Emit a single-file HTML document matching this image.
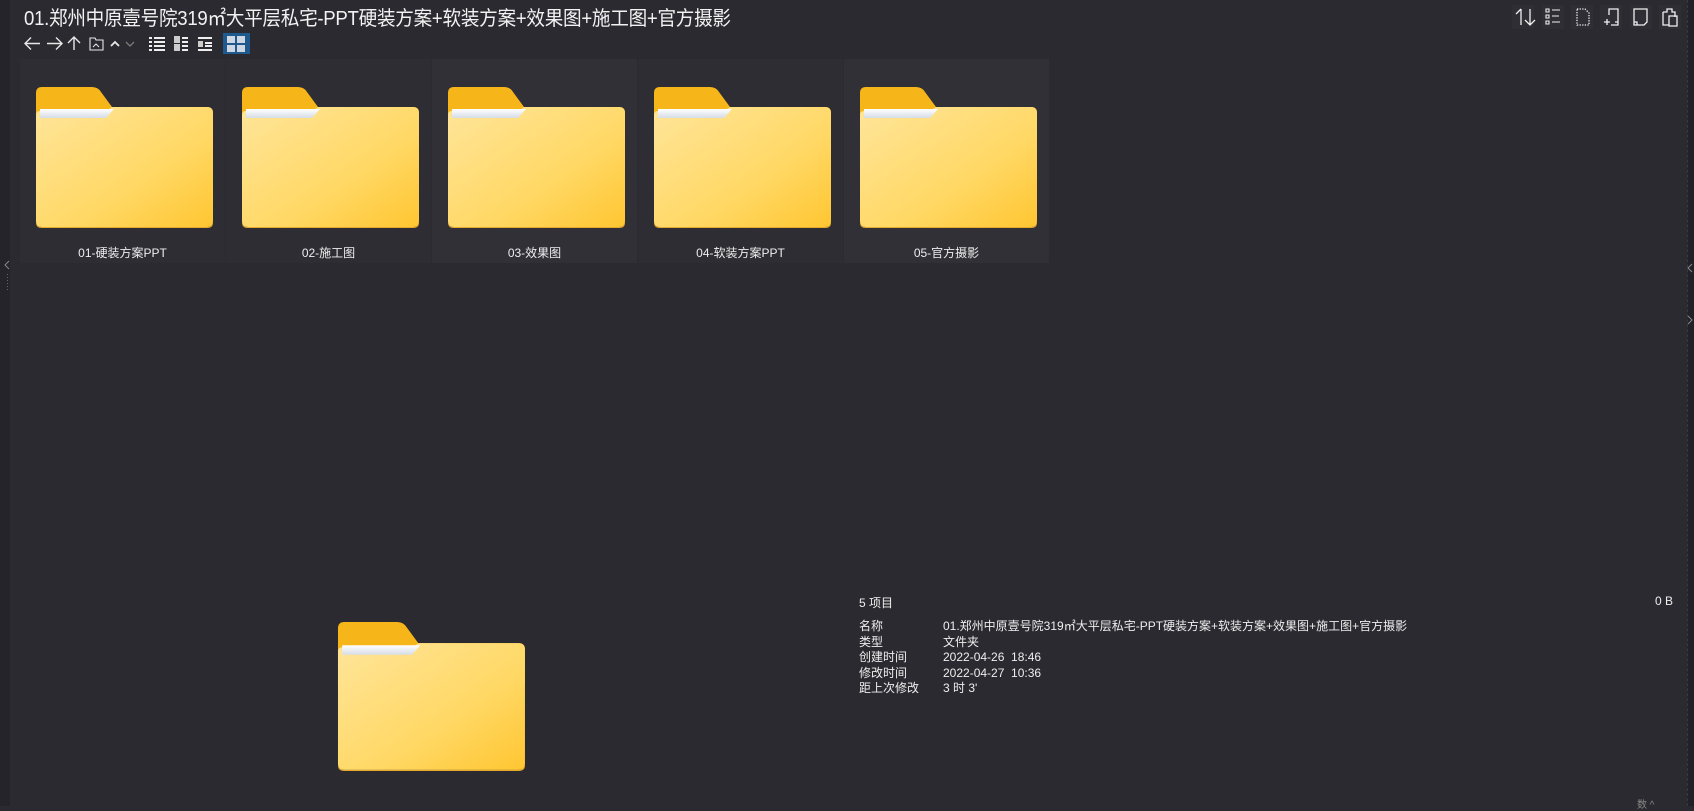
<!DOCTYPE html>
<html><head><meta charset="utf-8"><style>
*{margin:0;padding:0;box-sizing:border-box}
body{width:1694px;height:806px;background:#2b2a30;overflow:hidden;position:relative;font-family:"Liberation Sans","Noto Sans CJK SC",sans-serif;color:#fff}
.ls{position:absolute;left:0;top:0;width:10px;height:806px;background:#25242a}
.rs{position:absolute;right:0;top:0;width:7px;height:806px;background:#222127;border-left:1px dashed #3a3940}
.title{position:absolute;left:24px;top:2px;font-size:20px;letter-spacing:-0.3px;color:#f2f2f2;white-space:nowrap;transform:scaleX(0.93);transform-origin:0 0}
.tb{position:absolute;top:33px;height:21px}
.tile{position:absolute;top:59px;width:205px;height:204px;background:#2e2d33}
.tile.l{background:#313037}
.tile svg{position:absolute;left:16px;top:28px}
.tile .n{position:absolute;left:0;right:0;top:186px;line-height:16px;text-align:center;font-size:12px;color:#eee}
.info{position:absolute;left:859px;font-size:12px;color:#eee;white-space:nowrap}
.ic{position:absolute;top:5px;width:22px;height:24px;background:#2f2e34}
</style></head><body>
<div class="ls"></div><div class="rs"></div>
<svg width="10" height="40" style="position:absolute;left:2px;top:258px"><path d="M7 3 3 7 7 11" stroke="#888" fill="none"/><g fill="#666"><rect x="5" y="16" width="1" height="1"/><rect x="5" y="19" width="1" height="1"/><rect x="5" y="22" width="1" height="1"/><rect x="5" y="25" width="1" height="1"/><rect x="5" y="28" width="1" height="1"/><rect x="5" y="31" width="1" height="1"/></g></svg>
<svg width="8" height="64" style="position:absolute;left:1686px;top:262px"><path d="M6 2 2 6 6 10" stroke="#888" fill="none"/><path d="M2 54 6 58 2 62" stroke="#888" fill="none"/></svg>
<div class="title">01.郑州中原壹号院319㎡大平层私宅-PPT硬装方案+软装方案+效果图+施工图+官方摄影</div>
<svg class="tb" style="left:22px" width="230" height="21" fill="none" stroke="#e8e8e8" stroke-width="1.4">
<path d="M3 10.5h15M9 4.5 3 10.5 9 16.5"/>
<path d="M25 10.5h15M34 4.5 40 10.5 34 16.5"/>
<path d="M52 17V4M46 10 52 4 58 10"/>
<path d="M68 5h5l1 2h7v10H68z" stroke-width="1.1"/><path d="M71 14l3-3 3 3" stroke-width="1"/>
<path d="M89 13l4-4 4 4" stroke-width="1.8"/>
<path d="M104 9l4 4 4-4" stroke="#777"/>
<g fill="#eee" stroke="none"><rect x="127" y="4" width="3" height="2"/><rect x="132" y="4" width="11" height="2"/><rect x="127" y="8" width="3" height="2"/><rect x="132" y="8" width="11" height="2"/><rect x="127" y="12" width="3" height="2"/><rect x="132" y="12" width="11" height="2"/><rect x="127" y="16" width="3" height="2"/><rect x="132" y="16" width="11" height="2"/>
<rect x="152" y="3" width="6" height="7" fill="#ccc"/><rect x="152" y="11" width="6" height="7" fill="#ccc"/><rect x="160" y="4" width="6" height="2"/><rect x="160" y="8" width="6" height="2"/><rect x="160" y="12" width="6" height="2"/><rect x="160" y="16" width="6" height="2"/>
<rect x="176" y="4" width="14" height="2"/><rect x="176" y="8" width="5" height="6" fill="#ccc"/><rect x="183" y="9" width="7" height="2"/><rect x="183" y="12" width="7" height="2"/><rect x="176" y="16" width="14" height="2"/></g>
<rect x="201" y="0" width="27" height="21" fill="#1f5a8e" stroke="none"/>
<g fill="#cfd8e2" stroke="none"><rect x="205" y="3" width="8" height="7"/><rect x="215" y="3" width="8" height="7"/><rect x="205" y="12" width="8" height="7"/><rect x="215" y="12" width="8" height="7"/></g>
</svg>
<svg width="0" height="0" style="position:absolute"><defs>
<linearGradient id="fg" x1="0" y1="0" x2="1" y2="1"><stop offset="0" stop-color="#ffe59a"/><stop offset="0.6" stop-color="#ffd865"/><stop offset="1" stop-color="#ffc631"/></linearGradient>
<linearGradient id="pp" x1="0" y1="0" x2="0" y2="1"><stop offset="0" stop-color="#fff"/><stop offset="1" stop-color="#d6dde6"/></linearGradient>
<g id="fd">
<path d="M6 0H56Q62 0 65 5L76 20H171Q177 20 177 26V60H0V6Q0 0 6 0Z" fill="#f6b61a"/>
<path d="M0 28Q0 24 4 24H70L76 20H171Q177 20 177 26V134Q177 140 171 140H6Q0 140 0 134Z" fill="url(#fg)"/>
<path d="M0 134Q0 140 6 140H171Q177 140 177 134V136Q177 141 171 141H6Q0 141 0 136Z" fill="#e6a92c"/>
<path d="M4 22H78L70 31H4Z" fill="url(#pp)"/>
</g></defs></svg>
<div class="tile" style="left:20px"><svg width="178" height="142" viewBox="0 0 178 142"><use href="#fd"/></svg><div class="n">01-硬装方案PPT</div></div>
<div class="tile" style="left:226px"><svg width="178" height="142" viewBox="0 0 178 142"><use href="#fd"/></svg><div class="n">02-施工图</div></div>
<div class="tile l" style="left:432px"><svg width="178" height="142" viewBox="0 0 178 142"><use href="#fd"/></svg><div class="n">03-效果图</div></div>
<div class="tile" style="left:638px"><svg width="178" height="142" viewBox="0 0 178 142"><use href="#fd"/></svg><div class="n">04-软装方案PPT</div></div>
<div class="tile l" style="left:844px"><svg width="178" height="142" viewBox="0 0 178 142"><use href="#fd"/></svg><div class="n">05-官方摄影</div></div>
<svg style="position:absolute;left:337px;top:622px" width="190" height="150" viewBox="0 0 178 142"><use href="#fd"/></svg>
<div class="info" style="top:594px">5 项目</div>
<div class="info" style="left:1655px;top:594px">0 B</div>
<div class="info" style="top:619px;line-height:15.5px">名称<br>类型<br>创建时间<br>修改时间<br>距上次修改</div>
<div class="info" style="left:943px;top:619px;line-height:15.5px">01.郑州中原壹号院319㎡大平层私宅-PPT硬装方案+软装方案+效果图+施工图+官方摄影<br>文件夹<br>2022-04-26&nbsp; 18:46<br>2022-04-27&nbsp; 10:36<br>3 时 3'</div>
<div class="ic" style="left:1512px"></div><div class="ic" style="left:1542px"></div><div class="ic" style="left:1571px"></div><div class="ic" style="left:1600px"></div><div class="ic" style="left:1630px"></div><div class="ic" style="left:1659px"></div>
<svg style="position:absolute;left:1512px;top:5px" width="172" height="24" fill="none" stroke="#f0f0f0" stroke-width="1.3">
<path d="M9 20V4M4 9l5-5M18 4v16M13 15l5 5 5-5"/>
<path d="M34 4h3v3h-3zM34 10h3v3h-3zM34 16h3v3h-3zM40 5h8M40 11h7M40 17h8" stroke-width="1.1"/>
<path d="M65 4h8l4 4v12H65z" stroke-dasharray="1.3 1.3"/>
<path d="M97 10V4h9v16h-7M92 17h6M95 14v6M103 17h3" />
<path d="M122 4h13v13l-3 3h-10zM122 17h3v3" />
<path d="M151 7h4v-3h5v3h3v5M151 7v13h6M157 11h8v10h-8z"/>
</svg>
<div style="position:absolute;left:1637px;top:796px;font-size:10px;color:#888">数 ^</div>
</body></html>
